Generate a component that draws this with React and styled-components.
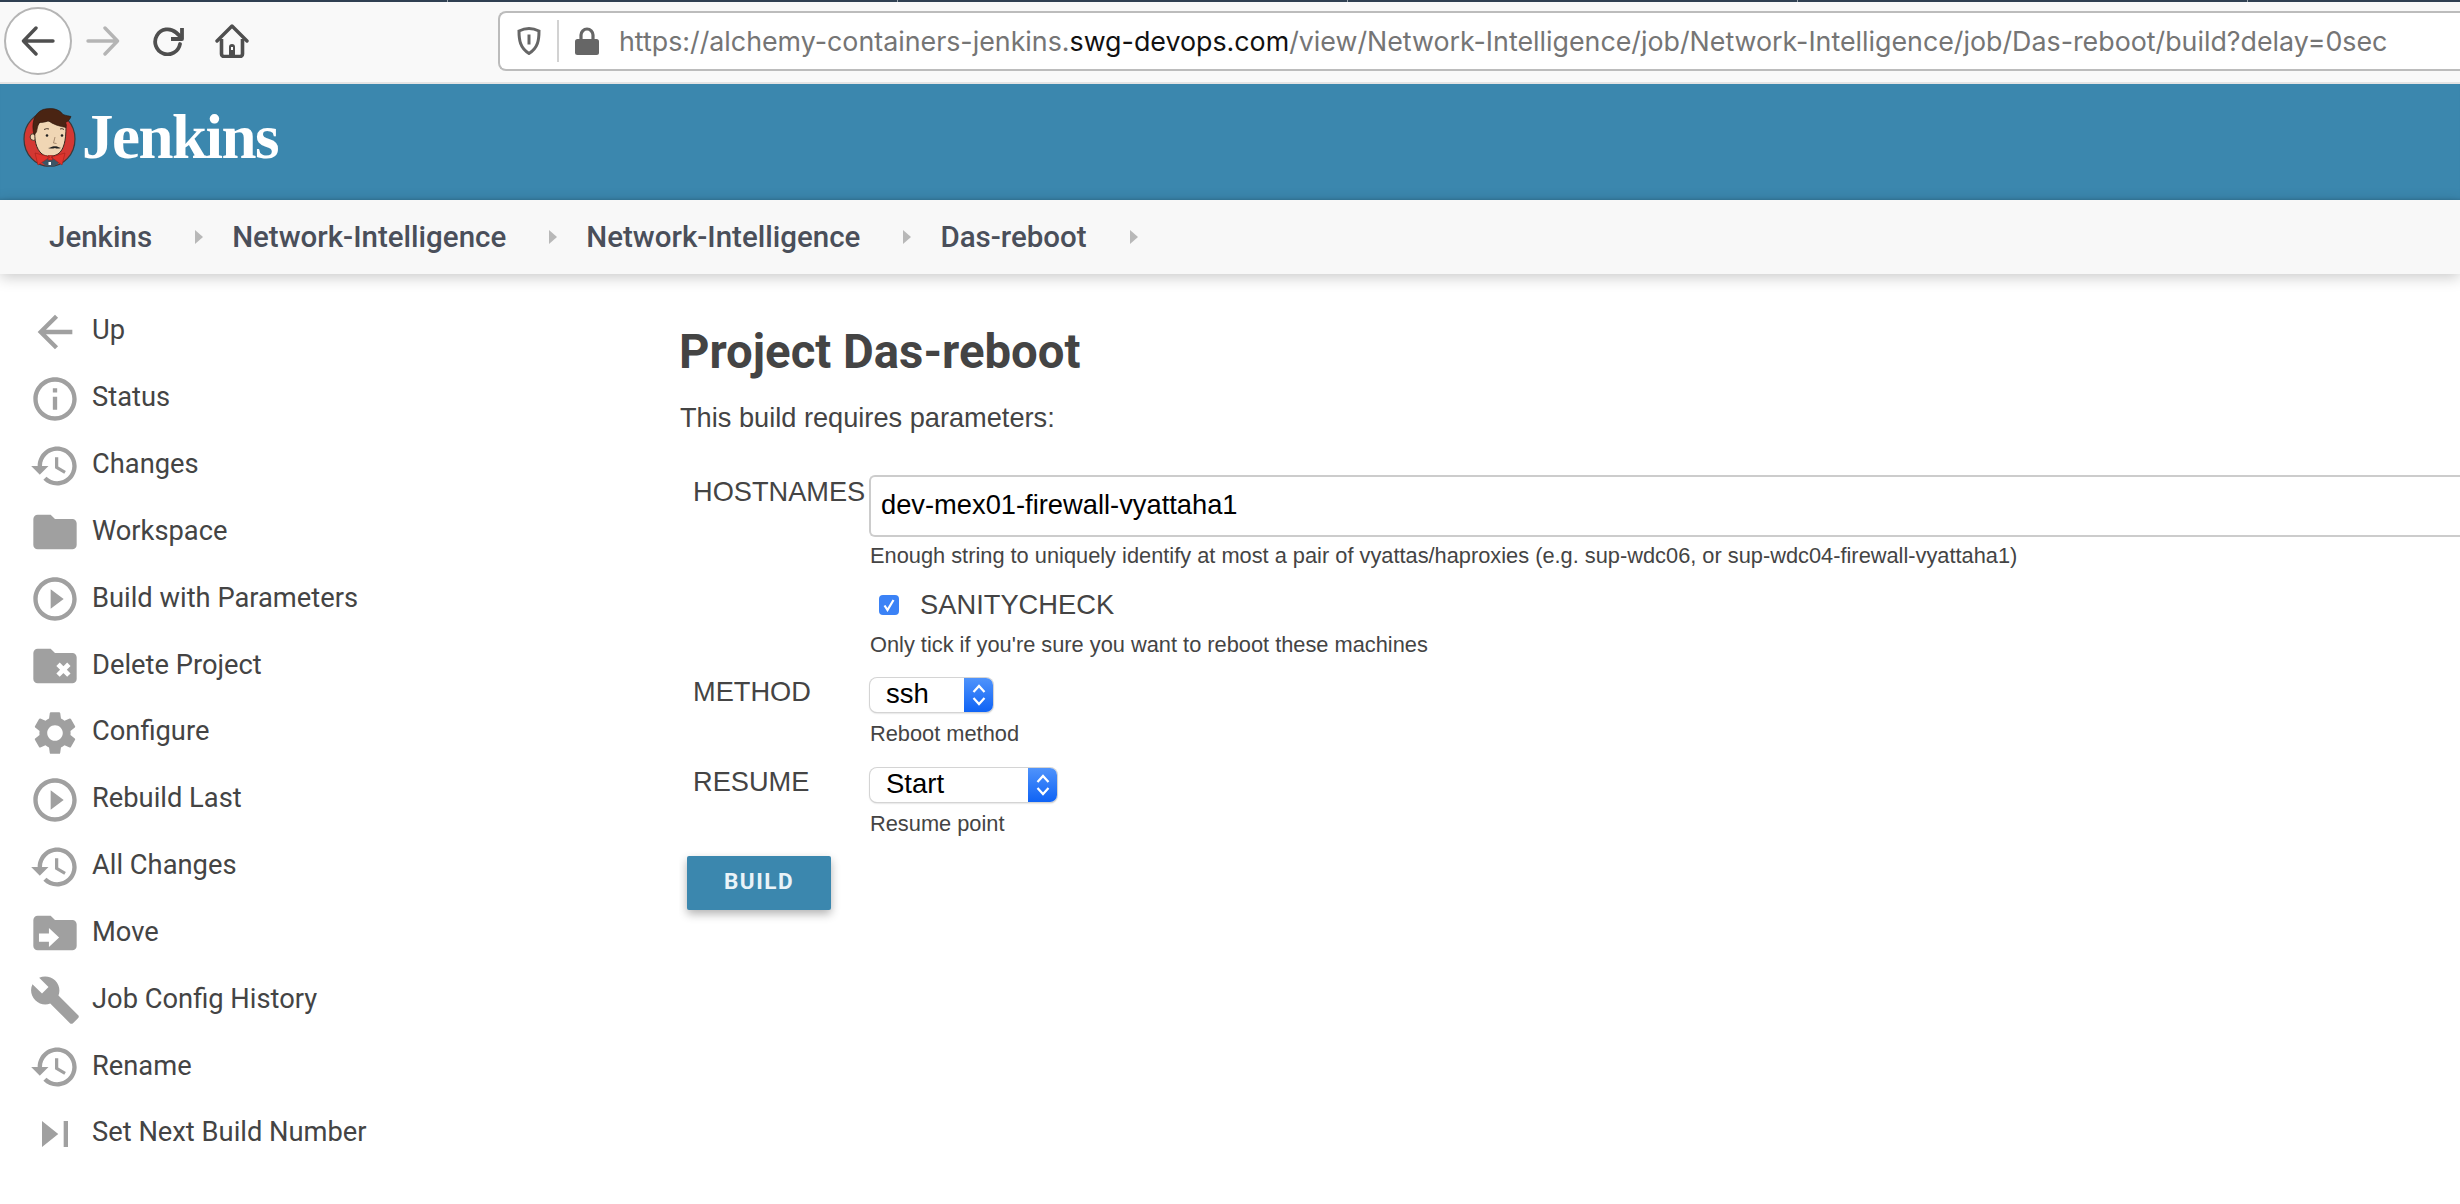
import { createGlobalStyle, styled } from "styled-components";

const GlobalStyle = createGlobalStyle`
  html, body {
    margin: 0;
    padding: 0;
    height: 100%;
    background: #fff;
    overflow: hidden;
  }
  * { box-sizing: border-box; }
`;

// Material icon paths, 24 x 24
const ICONS = {
  up: "M20 11H7.83l5.59-5.59L12 4l-8 8 8 8 1.41-1.41L7.83 13H20v-2z",
  info: "M11 17h2v-6h-2v6zm1-15C6.48 2 2 6.48 2 12s4.48 10 10 10 10-4.48 10-10S17.52 2 12 2zm0 18c-4.41 0-8-3.59-8-8s3.59-8 8-8 8 3.59 8 8-3.59 8-8 8zM11 9h2V7h-2v2z",
  history: "M13 3c-4.97 0-9 4.03-9 9H1l3.89 3.89.07.14L9 12H6c0-3.87 3.13-7 7-7s7 3.13 7 7-3.13 7-7 7c-1.93 0-3.68-.79-4.94-2.06l-1.42 1.42C8.27 19.99 10.51 21 13 21c4.97 0 9-4.03 9-9s-4.03-9-9-9zm-1 5v5l4.28 2.54.72-1.21-3.5-2.08V8H12z",
  folder: "M10 4H4c-1.1 0-1.99.9-1.99 2L2 18c0 1.1.9 2 2 2h16c1.1 0 2-.9 2-2V8c0-1.1-.9-2-2-2h-8l-2-2z",
  play: "M10 16.5l6-4.5-6-4.5v9zM12 2C6.48 2 2 6.48 2 12s4.48 10 10 10 10-4.48 10-10S17.52 2 12 2zm0 18c-4.41 0-8-3.59-8-8s3.59-8 8-8 8 3.59 8 8-3.59 8-8 8z",
  gear: "M19.14 12.94c.04-.3.06-.61.06-.94 0-.32-.02-.64-.07-.94l2.03-1.58c.18-.14.23-.41.12-.61l-1.92-3.32c-.12-.22-.37-.29-.59-.22l-2.39.96c-.5-.38-1.03-.7-1.62-.94l-.36-2.54c-.04-.24-.24-.41-.48-.41h-3.84c-.24 0-.43.17-.47.41l-.36 2.54c-.59.24-1.13.57-1.62.94l-2.39-.96c-.22-.08-.47 0-.59.22L2.74 8.87c-.12.21-.08.47.12.61l2.03 1.58c-.05.3-.09.63-.09.94s.02.64.07.94l-2.03 1.58c-.18.14-.23.41-.12.61l1.92 3.32c.12.22.37.29.59.22l2.39-.96c.5.38 1.03.7 1.62.94l.36 2.54c.05.24.24.41.48.41h3.84c.24 0 .44-.17.47-.41l.36-2.54c.59-.24 1.13-.56 1.62-.94l2.39.96c.22.08.47 0 .59-.22l1.92-3.32c.12-.22.07-.47-.12-.61l-2.01-1.58zM12 15.6c-1.98 0-3.6-1.62-3.6-3.6s1.62-3.6 3.6-3.6 3.6 1.62 3.6 3.6-1.62 3.6-3.6 3.6z",
  wrench: "M22.7 19l-9.1-9.1c.9-2.3.4-5-1.5-6.9-2-2-5-2.4-7.4-1.3L9 6 6 9 1.6 4.7C.4 7.1.9 10.1 2.9 12.1c1.9 1.9 4.6 2.4 6.9 1.5l9.1 9.1c.4.4 1 .4 1.4 0l2.3-2.3c.5-.4.5-1.1.1-1.4z",
  next: "M6 18l7.5-6L6 6v12zM16 6v12h2V6h-2z",
};

const menuItems = [
  { label: "Up", icon: "up" },
  { label: "Status", icon: "info" },
  { label: "Changes", icon: "history" },
  { label: "Workspace", icon: "folder" },
  { label: "Build with Parameters", icon: "play" },
  { label: "Delete Project", icon: "folder", mark: "x" },
  { label: "Configure", icon: "gear" },
  { label: "Rebuild Last", icon: "play" },
  { label: "All Changes", icon: "history" },
  { label: "Move", icon: "folder", mark: "arrow" },
  { label: "Job Config History", icon: "wrench" },
  { label: "Rename", icon: "history" },
  { label: "Set Next Build Number", icon: "next" },
];

const crumbs = ["Jenkins", "Network-Intelligence", "Network-Intelligence", "Das-reboot"];

function MenuIcon({ icon, mark }) {
  return (
    <IconSvg viewBox="0 0 24 24">
      <path d={ICONS[icon]} fill="#a0a0a0" />
      {mark === "x" && (
        <path d="M13.4 11.2l5 5M18.4 11.2l-5 5" stroke="#fff" strokeWidth="2.2" fill="none" />
      )}
      {mark === "arrow" && (
        <path d="M4.6 12.2h4.6V9.7l4.7 4.4-4.7 4.4V16H4.6z" fill="#fff" />
      )}
    </IconSvg>
  );
}

function JenkinsLogo() {
  return (
    <svg width="53" height="60" viewBox="0 0 53 60">
      <ellipse cx="26.5" cy="31" rx="25.5" ry="27.5" fill="#d33833" stroke="#3a3a3a" strokeWidth="1.2" />
      <path d="M14 50c4 4 9 9 13 9s9-3 13-9l-13-4z" fill="#3c5566" />
      <circle cx="10.5" cy="29" r="3.4" fill="#f0d6b4" stroke="#3a2a20" strokeWidth="0.9" />
      <path d="M12 20c-1 12 1 21 7 26 4 3 11 3 16 0 6-4 8-14 8-27l-8-6H18z" fill="#f0d6b4" stroke="#3a2a20" strokeWidth="1" />
      <path d="M11 27C8 16 11 5 20 1.500c8-2 16-1 20 5 3 1 6 1.500 8 2-1 3-3 5-5.500 6 1 2 1 3 .5 5-6-1-13-3-18-7-2 2-7 2-9 2-1 3-2 6-2.500 9.500z" fill="#4a2413" stroke="#2c160c" strokeWidth="0.6" />
      <circle cx="24" cy="27.500" r="1.300" fill="#222" />
      <circle cx="39" cy="27.500" r="1.300" fill="#222" />
      <path d="M21 21.500q3-1.500 5-.5M37 21q2-1 4 .5" stroke="#3a2a20" strokeWidth="0.9" fill="none" />
      <path d="M25 40c3 0 5-2.500 7-1.500 2-1 3 1 6 1.500-3 1-5 .5-6 0-2 .5-4 1-7 0z" fill="#222" />
      <path d="M32 29l-1.500 6 3 .5" stroke="#8a6a50" strokeWidth="0.7" fill="none" />
      <path d="M12 45l15 4-12 8zM42 45l-14 4 11 8zM25 47.500h4.500v4.500H25z" fill="#e0342c" stroke="#a5201a" strokeWidth="0.6" />
      <path d="M25.500 54h2.500v3h-2.500z" fill="#fff" />
    </svg>
  );
}

function SelectArrow() {
  return (
    <ArrowBox>
      <svg width="16" height="24" viewBox="0 0 16 24">
        <path d="M2.5 9L8 3l5.5 6M2.5 15L8 21l5.5-6" stroke="#fff" strokeWidth="2.2" fill="none" />
      </svg>
    </ArrowBox>
  );
}

export default function App() {
  return (
    <Page>
      <GlobalStyle />
      <TabStrip />
      <BrowserBar>
        <BackButton>
          <svg width="34" height="30" viewBox="0 0 34 30">
            <path d="M32 15H3M15 2L2.5 15 15 28" stroke="#4f4f4f" strokeWidth="3.4" strokeLinecap="round" strokeLinejoin="round" fill="none" />
          </svg>
        </BackButton>
        <NavIcon $left={14} width="34" height="30" viewBox="0 0 34 30">
          <path d="M2 15h29M19 2l12.5 13L19 28" stroke="#b5b5b5" strokeWidth="3.4" strokeLinecap="round" strokeLinejoin="round" fill="none" />
        </NavIcon>
        <NavIcon $left={32} width="32" height="30" viewBox="0 0 32 30">
          <path d="M28 18a12.5 12.5 0 1 1-4-11.5L29 11" stroke="#4f4f4f" strokeWidth="3.8" strokeLinecap="round" fill="none" />
          <path d="M30 2v11H19" stroke="#4f4f4f" strokeWidth="3.8" strokeLinejoin="round" fill="none" />
        </NavIcon>
        <NavIcon $left={31} width="34" height="34" viewBox="0 0 34 34">
          <path d="M2 17L17 2l15 15" stroke="#4f4f4f" strokeWidth="3.4" strokeLinecap="round" strokeLinejoin="round" fill="none" />
          <path d="M6.5 15v15a2.5 2.5 0 0 0 2.5 2.5h16a2.5 2.5 0 0 0 2.5-2.5V15" stroke="#4f4f4f" strokeWidth="3.6" fill="none" />
          <path d="M14 32v-9a3 3 0 0 1 6 0v9z" fill="#4f4f4f" />
          <rect x="16" y="23" width="2" height="3" fill="#fff" />
        </NavIcon>
        <UrlBar>
          <svg width="24" height="28" viewBox="0 0 24 28">
            <path d="M12 1.5c4 0 7 1 10 2.5 0 9-1 17-10 22.5C3 21 2 13 2 4c3-1.5 6-2.5 10-2.5z" stroke="#666" strokeWidth="3" fill="none" />
            <path d="M10.5 7.5h3v10h-3z" fill="#666" />
          </svg>
          <UrlDivider />
          <svg width="24" height="28" viewBox="0 0 24 28">
            <path d="M6 13V8a6 6 0 0 1 12 0v5" stroke="#666" strokeWidth="3.2" fill="none" />
            <rect x="0" y="12" width="24" height="16" rx="2.5" fill="#666" />
          </svg>
          <UrlText>
            https://alchemy-containers-jenkins.<b>swg-devops.com</b>/view/Network-Intelligence/job/Network-Intelligence/job/Das-reboot/build?delay=0sec
          </UrlText>
        </UrlBar>
      </BrowserBar>

      <Header>
        <JenkinsLogo />
        <Brand>Jenkins</Brand>
      </Header>

      <Breadcrumbs>
        {crumbs.map((crumb, i) => (
          <Crumb key={i}>
            {crumb}
            <CrumbArrow />
          </Crumb>
        ))}
      </Breadcrumbs>

      <Body>
        <Sidebar>
          {menuItems.map((item) => (
            <MenuRow key={item.label}>
              <MenuIcon icon={item.icon} mark={item.mark} />
              <MenuLabel>{item.label}</MenuLabel>
            </MenuRow>
          ))}
        </Sidebar>

        <Main>
          <Title>Project Das-reboot</Title>
          <Intro>This build requires parameters:</Intro>

          <Form>
            <FieldLabel>HOSTNAMES</FieldLabel>
            <FieldBody>
              <TextInput defaultValue="dev-mex01-firewall-vyattaha1" />
              <Help $gap={5}>
                Enough string to uniquely identify at most a pair of vyattas/haproxies (e.g. sup-wdc06, or sup-wdc04-firewall-vyattaha1)
              </Help>
            </FieldBody>

            <span />
            <FieldBody>
              <CheckRow>
                <CheckBox>
                  <svg width="12" height="14" viewBox="0 0 12 14">
                    <path d="M1.5 7.5l3 4.5 6-10" stroke="#fff" strokeWidth="2.2" fill="none" />
                  </svg>
                </CheckBox>
                SANITYCHECK
              </CheckRow>
              <Help $gap={10}>Only tick if you're sure you want to reboot these machines</Help>
            </FieldBody>

            <FieldLabel>METHOD</FieldLabel>
            <FieldBody $bottom={1}>
              <SelectBox $width={123}>
                <SelectValue defaultValue="ssh">
                  <option>ssh</option>
                </SelectValue>
                <SelectArrow />
              </SelectBox>
              <Help $gap={8}>Reboot method</Help>
            </FieldBody>

            <FieldLabel>RESUME</FieldLabel>
            <FieldBody $bottom={1}>
              <SelectBox $width={187}>
                <SelectValue defaultValue="Start">
                  <option>Start</option>
                </SelectValue>
                <SelectArrow />
              </SelectBox>
              <Help $gap={8}>Resume point</Help>
            </FieldBody>
          </Form>

          <BuildButton>BUILD</BuildButton>
        </Main>
      </Body>
    </Page>
  );
}

// ---------- Styles ----------

const Page = styled.div`
  width: 2460px;
  height: 1204px;
  overflow: hidden;
  display: flex;
  flex-direction: column;
  font-family: "Roboto", sans-serif;
  color: #444;
`;

// Dark edge of the tab bar, one hairline between each tab
const TabStrip = styled.div`
  height: 2px;
  background: linear-gradient(90deg, #2f4052 0 449px, #9aa3ab 449px 450px) -2px 0 / 450px 2px repeat-x;
`;

const BrowserBar = styled.div`
  height: 82px;
  display: flex;
  align-items: center;
  padding: 0 0 2px 4px;
  background: #f9f9f9;
  border-bottom: 2px solid #e4e4e4;
`;

const BackButton = styled.div`
  width: 68px;
  height: 68px;
  flex: none;
  display: flex;
  align-items: center;
  justify-content: center;
  border: 2px solid #b5b5b5;
  border-radius: 50%;
  background: #fff;
`;

const NavIcon = styled.svg`
  flex: none;
  margin-left: ${(props) => props.$left}px;
`;

const UrlBar = styled.div`
  flex: 1;
  height: 60px;
  margin-left: 249px;
  display: flex;
  align-items: center;
  padding-left: 17px;
  background: #fff;
  border: 2px solid #bcbcbc;
  border-right: none;
  border-radius: 8px 0 0 8px;
`;

const UrlDivider = styled.div`
  width: 2px;
  height: 42px;
  margin: 0 16px;
  background: #d2d2d2;
`;

const UrlText = styled.div`
  margin-left: 20px;
  font-family: "Inter", sans-serif;
  font-size: 26.8px;
  color: #757575;
  white-space: nowrap;

  b {
    font-weight: 400;
    color: #111;
  }
`;

const Header = styled.div`
  height: 116px;
  display: flex;
  align-items: center;
  gap: 6px;
  padding: 0 0 8px 23px;
  background: #3b87ae;
  box-shadow: inset 0 -3px 3px -2px rgba(0, 0, 0, 0.12);
`;

const Brand = styled.div`
  font-family: "Liberation Serif", serif;
  font-weight: 700;
  font-size: 63px;
  line-height: 1;
  letter-spacing: -1.5px;
  margin-top: -2px;
  color: #fff;
`;

const Breadcrumbs = styled.div`
  height: 74px;
  display: flex;
  align-items: center;
  padding-left: 49px;
  background: #f8f8f8;
  box-shadow: 0 3px 14px rgba(0, 0, 0, 0.22);
`;

const Crumb = styled.div`
  display: flex;
  align-items: center;
  font-size: 29.5px;
  font-weight: 500;
  color: #4a4f5a;
`;

const CrumbArrow = styled.span`
  width: 0;
  height: 0;
  margin: 0 29px 0 43px;
  border-left: 8px solid #b8b8b8;
  border-top: 7px solid transparent;
  border-bottom: 7px solid transparent;
`;

const Body = styled.div`
  flex: 1;
  display: flex;
  min-height: 0;
`;

const Sidebar = styled.nav`
  width: 679px;
  flex: none;
  padding: 23px 0 0 29px;
`;

const MenuRow = styled.div`
  height: 66.83px;
  display: flex;
  align-items: center;
  gap: 11px;
`;

const IconSvg = styled.svg`
  width: 52px;
  height: 52px;
  flex: none;
  margin-top: 3px;
`;

const MenuLabel = styled.span`
  font-size: 27.3px;
  color: #444;
`;

const Main = styled.main`
  flex: 1;
  min-width: 0;
  padding-top: 52px;
  overflow: hidden;
`;

const Title = styled.h1`
  margin: 0;
  font-size: 47.3px;
  line-height: 52px;
  font-weight: 700;
  color: #444;
`;

const Intro = styled.p`
  margin: 25px 0 0 1px;
  font-family: "Liberation Sans", sans-serif;
  font-size: 27.2px;
  line-height: 30px;
  color: #444;
`;

const Form = styled.div`
  display: grid;
  grid-template-columns: 190px 1fr;
  row-gap: 16px;
  margin-top: 42px;
  font-family: "Liberation Sans", sans-serif;
`;

const FieldLabel = styled.div`
  padding: 1px 0 0 14px;
  font-size: 27.2px;
  line-height: 32px;
  color: #444;
  white-space: nowrap;
`;

const FieldBody = styled.div`
  min-width: 0;
  display: flex;
  flex-direction: column;
  align-items: flex-start;
  padding-bottom: ${(props) => props.$bottom || 0}px;
`;

const TextInput = styled.input`
  width: 100%;
  height: 62px;
  padding: 0 0 3px 10px;
  border: 2px solid #ccc;
  border-right: none;
  border-radius: 6px 0 0 6px;
  outline: none;
  font-family: "Liberation Sans", sans-serif;
  font-size: 27.3px;
  color: #000;
`;

const Help = styled.div`
  margin: ${(props) => props.$gap}px 0 0 1px;
  font-size: 21.8px;
  line-height: 28px;
  color: #444;
  white-space: nowrap;
`;

const CheckRow = styled.div`
  display: flex;
  align-items: center;
  height: 32px;
  margin: 3px 0 0 10px;
  font-size: 27.3px;
  color: #444;
`;

const CheckBox = styled.span`
  width: 20px;
  height: 20px;
  margin-right: 21px;
  display: flex;
  align-items: center;
  justify-content: center;
  background: #3b82f6;
  border-radius: 4px;
`;

const SelectBox = styled.div`
  width: ${(props) => props.$width}px;
  height: 34px;
  margin: 3px 0 0 1px;
  display: flex;
  background: #fff;
  border-radius: 7px;
  box-shadow: 0 0 0 1px #d4d4d4, 0 1px 2px rgba(0, 0, 0, 0.3);
  overflow: hidden;
`;

const SelectValue = styled.select`
  flex: 1;
  min-width: 0;
  padding: 0 0 4px 16px;
  border: none;
  outline: none;
  appearance: none;
  background: transparent;
  font-family: "Liberation Sans", sans-serif;
  font-size: 27.5px;
  color: #000;
`;

const ArrowBox = styled.div`
  width: 29px;
  flex: none;
  display: flex;
  align-items: center;
  justify-content: center;
  background: linear-gradient(#4f93fb, #0f63f5);
`;

const BuildButton = styled.button`
  display: block;
  width: 144px;
  height: 54px;
  margin: 17px 0 0 8px;
  padding: 0 0 4px;
  border: none;
  border-radius: 2px;
  background: #3b87ae;
  box-shadow: 0 4px 10px rgba(0, 0, 0, 0.3);
  font-family: "Roboto", sans-serif;
  font-size: 22.5px;
  font-weight: 700;
  letter-spacing: 1.5px;
  color: #eaf3f8;
`;
